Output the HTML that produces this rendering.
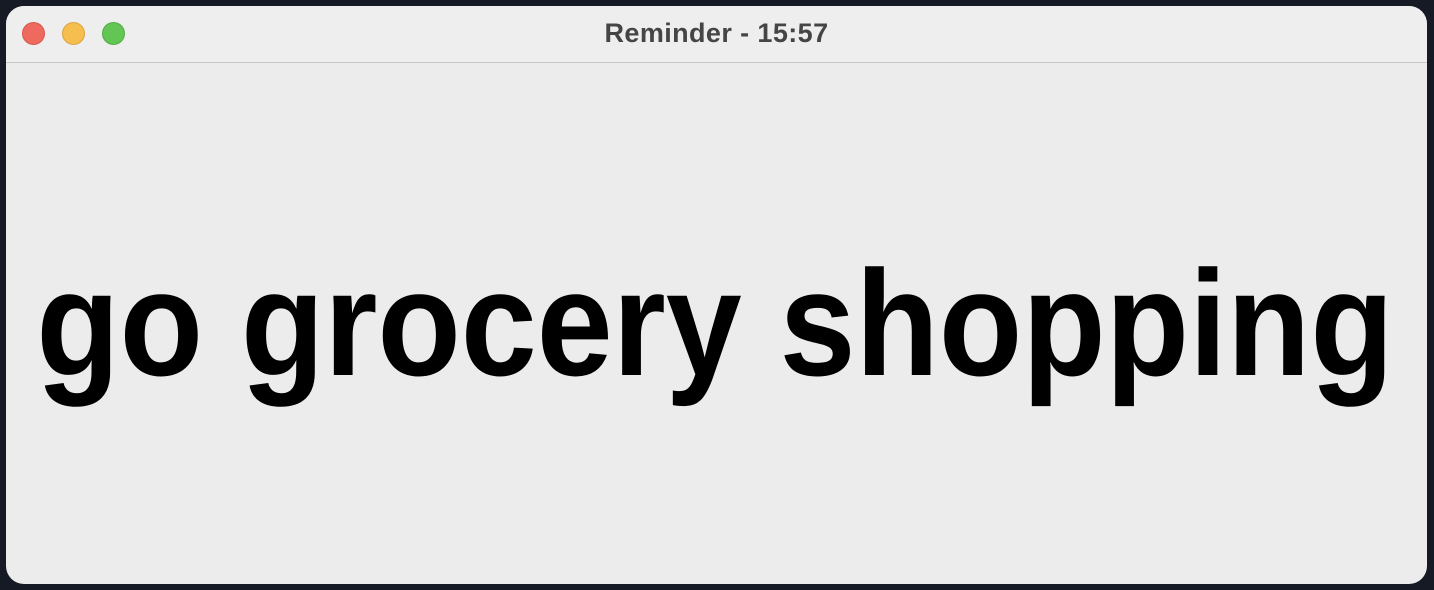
<!DOCTYPE html>
<html><head><meta charset="utf-8"><style>
html,body{margin:0;padding:0;width:1434px;height:590px;overflow:hidden;background:#151a25;}
.win{position:absolute;left:6px;top:6px;width:1421px;height:578px;background:#ececec;border-radius:18px;overflow:hidden;}
.bar{position:absolute;left:0;top:0;width:100%;height:56px;background:#eeeeee;border-bottom:1px solid #c8c8c8;}
.dot{position:absolute;top:16px;width:23px;height:23px;border-radius:50%;box-sizing:border-box;}
.title{position:absolute;left:0;width:100%;top:12px;text-align:center;font:bold 27px "Liberation Sans",sans-serif;color:#454545;letter-spacing:0.4px;}
.big{position:absolute;left:709px;top:242px;font:bold 150px/1 "Liberation Sans",sans-serif;color:#000;transform:translateX(-50%) scaleX(0.91);white-space:nowrap;}
</style></head><body>
<div class="win">
<div class="bar">
<div class="dot" style="left:16px;background:#ee6a5f;border:1px solid #d7574d"></div>
<div class="dot" style="left:56px;background:#f6be4f;border:1px solid #dba43e"></div>
<div class="dot" style="left:96px;background:#62c554;border:1px solid #52ac44"></div>
<div class="title">Reminder - 15:57</div>
</div>
<div class="big">go grocery shopping</div>
</div>
</body></html>
